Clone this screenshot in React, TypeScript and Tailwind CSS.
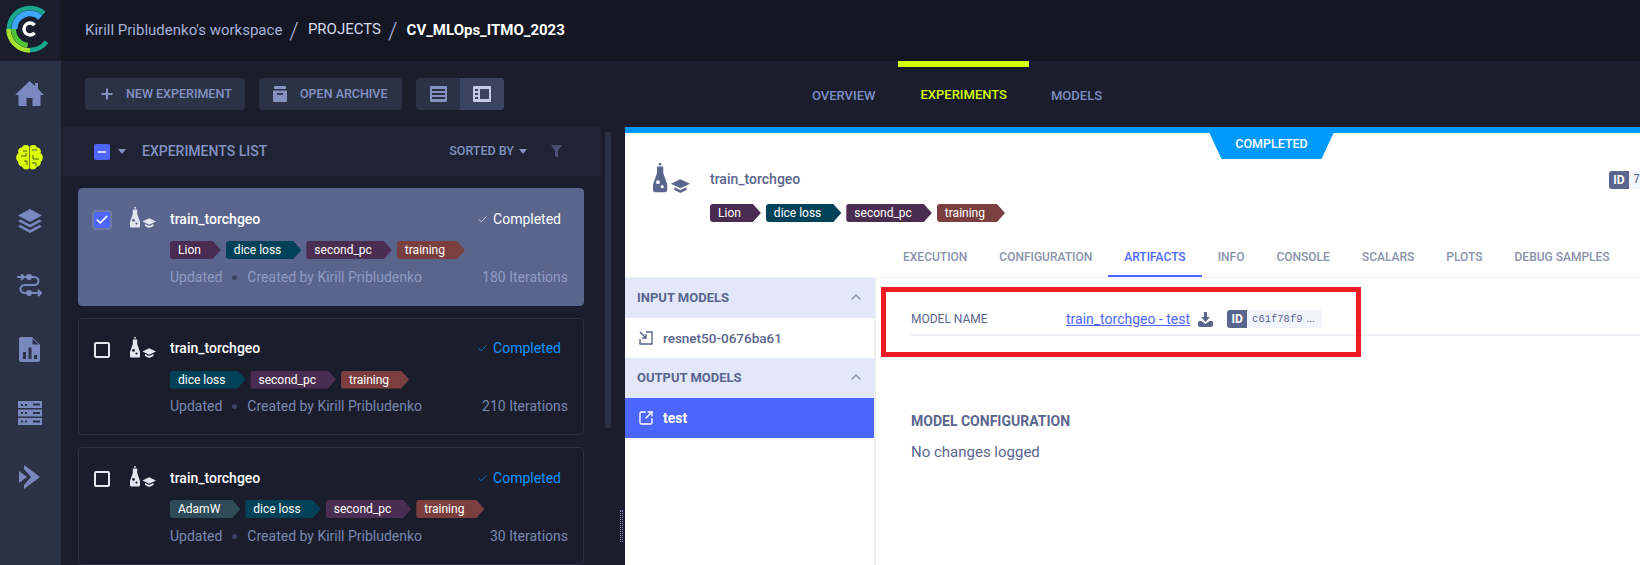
import React from 'react'
import { ChevronUp, Plus, Check, SquareArrowOutUpRight, Minus } from 'lucide-react'

const TAG_COLORS: Record<string, string> = {
  Lion: 'bg-[#4a2c52]',
  'dice loss': 'bg-[#024259]',
  second_pc: 'bg-[#4a2d50]',
  training: 'bg-[#7c3f3f]',
  AdamW: 'bg-[#2f4b57]',
}

const polar = (r: number, deg: number) => {
  const a = (deg * Math.PI) / 180
  return `${(30 + r * Math.cos(a)).toFixed(2)} ${(29 - r * Math.sin(a)).toFixed(2)}`
}

// arc going counter clockwise on screen from a0 to a1 (degrees, 0 = east)
const arc = (r: number, a0: number, a1: number) =>
  `M${polar(r, a0)} A${r} ${r} 0 ${a1 - a0 > 180 ? 1 : 0} 0 ${polar(r, a1)}`

function Logo() {
  return (
    <svg width="61" height="61" viewBox="0 0 61 61" fill="none">
      <path d={arc(21, 48, 180)} stroke="#18a78c" strokeWidth="4.5" />
      <path d={arc(15.5, 48, 180)} stroke="#3ea6ff" strokeWidth="6" />
      <path d={arc(21, -90, -38)} stroke="#18a78c" strokeWidth="4.5" />
      <path d={arc(21.5, 180, 270)} stroke="#a6e22e" strokeWidth="4.5" />
      <path d={arc(16.5, 180, 262)} stroke="#4fc23a" strokeWidth="5" />
      <path d={arc(6, 40, 320)} stroke="#ffffff" strokeWidth="3.4" />
    </svg>
  )
}

function HomeIcon() {
  return (
    <svg width="29" height="25" viewBox="0 0 29 25" fill="currentColor">
      <path d="M14.5 0 L20 5 V2 H23 V8 L29 14 H25.5 V25 H17.5 V17 H11.5 V25 H3.5 V14 H0 Z" />
    </svg>
  )
}

function BrainIcon() {
  return (
    <svg width="27" height="25" viewBox="0 0 27 25">
      <path
        fill="#d9ff00"
        d="M13.2 1.5 C11 -0.5 7 -0.5 6 2.5 C2.5 2.5 1.5 6 2.5 8 C-0.5 10 -0.5 14.5 2 16.5 C2 19.5 4 21.5 6 21.5 C7 24.5 11 25.5 13.2 23.5 Z M13.8 1.5 C16 -0.5 20 -0.5 21 2.5 C24.5 2.5 25.5 6 24.5 8 C27.5 10 27.5 14.5 25 16.5 C25 19.5 23 21.5 21 21.5 C20 24.5 16 25.5 13.8 23.5 Z"
      />
      <path
        fill="none"
        stroke="#2c3246"
        strokeWidth="0.8"
        d="M7 6 H11 M5 11 H10 V8 M8 16 H11 V20 M16 5 H21 M17 10 V14 H23 M16 18 H20 V21"
      />
    </svg>
  )
}

function LayersIcon() {
  return (
    <svg width="24" height="24" viewBox="0 0 24 24" fill="currentColor">
      <path d="M12 0 L24 6.5 L12 13 L0 6.5 Z" />
      <path d="M2.5 10.5 L12 15.5 L21.5 10.5 L24 12 L12 18.5 L0 12 Z" />
      <path d="M2.5 16 L12 21 L21.5 16 L24 17.5 L12 24 L0 17.5 Z" />
    </svg>
  )
}

function FlowIcon() {
  return (
    <svg width="25" height="23" viewBox="0 0 25 23" fill="none" stroke="currentColor" strokeWidth="2">
      <path d="M0 3 H17 C23 3 23 11 17 11 H8 C2 11 2 19 8 19 H24" />
      <path d="M4 0 L7 3 L4 6 M21 16 L24 19 L21 22" />
      <circle cx="12" cy="3" r="2" fill="currentColor" />
      <circle cx="12" cy="19" r="2" fill="currentColor" />
    </svg>
  )
}

function ReportIcon() {
  return (
    <svg width="21" height="25" viewBox="0 0 21 25">
      <path fill="currentColor" d="M2 0 H13 L21 8 V23 C21 24 20 25 19 25 H2 C1 25 0 24 0 23 V2 C0 1 1 0 2 0 Z" />
      <path fill="#2c3246" d="M13.5 1.5 L19.5 7.5 H13.5 Z M4 15 H7 V22 H4 Z M9.5 10.5 H12.5 V22 H9.5 Z M15 18 H18 V22 H15 Z" />
    </svg>
  )
}

function ServerIcon() {
  return (
    <svg width="24" height="24" viewBox="0 0 24 24">
      <path fill="currentColor" d="M0 0 H24 V7 H0 Z M0 8.5 H24 V15.5 H0 Z M0 17 H24 V24 H0 Z" />
      <path
        fill="#2c3246"
        d="M3 3 H5 V5 H3 Z M7 3 H9 V5 H7 Z M15 2.5 H22 V4.5 H15 Z M3 11 H5 V13 H3 Z M7 11 H9 V13 H7 Z M15 11 H22 V13 H15 Z M3 19.5 H5 V21.5 H3 Z M7 19.5 H9 V21.5 H7 Z M15 19.5 H22 V21.5 H15 Z"
      />
    </svg>
  )
}

function DeployIcon() {
  return (
    <svg width="21" height="24" viewBox="0 0 21 24" fill="currentColor">
      <path d="M5 0 L21 12 L5 24 V20 L12 12 L5 4 Z" />
      <path d="M0 6 L8 12 L0 18 Z" />
    </svg>
  )
}

function ExperimentIcon({ className }: { className?: string }) {
  return (
    <svg className={className} viewBox="0 0 26 21" fill="currentColor">
      <circle cx="5" cy="0.8" r="0.9" />
      <path
        fillRule="evenodd"
        d="M2.8 2.5 H7.2 V7 L10 15 V19 C10 20 9.4 20.5 8.4 20.5 H1.6 C0.6 20.5 0 20 0 19 V15 L2.8 7 Z M3.5 12 A1.4 1.4 0 1 0 3.5 14.8 A1.4 1.4 0 1 0 3.5 12 Z M6.5 15.5 A1.1 1.1 0 1 0 6.5 17.7 A1.1 1.1 0 1 0 6.5 15.5 Z"
      />
      <path d="M12.5 14.5 L19.2 11.3 L26 14.5 L19.2 17.7 Z" />
      <path d="M15 17 L19.2 19 L23.5 17 V19 L19.2 21 L15 19 Z" />
    </svg>
  )
}

function Tag({ label }: { label: string }) {
  return (
    <span
      className={`${TAG_COLORS[label]} h-[18px] pl-2 pr-[20px] rounded-l-[3px] text-[12px] leading-[18px] text-white [clip-path:polygon(0_0,calc(100%-8px)_0,100%_50%,calc(100%-8px)_100%,0_100%)]`}
    >
      {label}
    </span>
  )
}

function ExperimentCard({
  tags,
  iterations,
  selected,
}: {
  tags: string[]
  iterations: number
  selected?: boolean
}) {
  return (
    <div
      className={`h-[117.5px] shrink-0 flex rounded border pt-[23px] pl-[15px] ${
        selected ? 'bg-[#5a658e] border-[#5a658e]' : 'bg-[#1a1e2c] border-[#2c3246]'
      }`}
    >
      {selected ? (
        <span className="w-4 h-4 rounded-[2px] bg-[#4d66ff] outline-2 outline-[#6f7ba3] flex items-center justify-center text-white">
          <Check size={14} strokeWidth={3} />
        </span>
      ) : (
        <span className="w-4 h-4 rounded-[2px] border-2 border-[#e6e8f0]" />
      )}
      <ExperimentIcon className="w-[26px] h-[21px] ml-[20px] -mt-[5px] text-[#e3e6ef]" />
      <div className="ml-[14px] flex-1 pr-[15px]">
        <div className="flex items-center justify-between h-5 -mt-[3px]">
          <span className="text-[14px] font-medium text-white">train_torchgeo</span>
          <span
            className={`flex items-center gap-[5px] text-[14px] pr-[7px] ${
              selected ? 'text-white' : 'text-[#0a94ff]'
            }`}
          >
            <Check size={11} strokeWidth={1.5} />
            Completed
          </span>
        </div>
        <div className="flex gap-[5px] mt-[12px]">
          {tags.map((t) => (
            <Tag key={t} label={t} />
          ))}
        </div>
        <div className={`flex justify-between items-center mt-[8px] text-[14px] h-5 ${selected ? 'text-[#8e9ac4]' : 'text-[#7b87ad]'}`}>
          <span className="flex items-center">
            Updated
            <span className="w-[5px] h-[5px] rounded-full bg-[#3b4364] mx-[10px]" />
            Created by Kirill Pribludenko
          </span>
          <span>{iterations} Iterations</span>
        </div>
      </div>
    </div>
  )
}

function ModelSection({ title }: { title: string }) {
  return (
    <div className="h-10 bg-[#e2e7fb] flex items-center justify-between pl-3 pr-[10px] text-[13px] font-bold text-[#5a658e]">
      {title}
      <ChevronUp size={16} className="text-[#8a94b8] -mt-[2px]" />
    </div>
  )
}

export default function App() {
  const navIcons = [
    <HomeIcon key="home" />,
    <BrainIcon key="brain" />,
    <LayersIcon key="layers" />,
    <FlowIcon key="flow" />,
    <ReportIcon key="report" />,
    <ServerIcon key="server" />,
    <DeployIcon key="deploy" />,
  ]
  const tabs = ['EXECUTION', 'CONFIGURATION', 'ARTIFACTS', 'INFO', 'CONSOLE', 'SCALARS', 'PLOTS', 'DEBUG SAMPLES']

  return (
    <div className="w-[1640px] h-[565px] overflow-hidden flex bg-[#1a1e2c] font-['Roboto',sans-serif]">
      {/* Sidebar */}
      <div className="w-[61px] shrink-0 flex flex-col bg-[#2c3246]">
        <div className="h-[61px] bg-[#1a1e2c]">
          <Logo />
        </div>
        <div className="flex flex-col items-center">
          {navIcons.map((icon, i) => (
            <div key={i} className="h-16 w-full flex items-center justify-center text-[#7a88c0] -ml-[2px]">
              {icon}
            </div>
          ))}
        </div>
      </div>

      <div className="flex-1 min-w-0 flex flex-col">
        {/* Top bar */}
        <div className="h-[61px] shrink-0 bg-[#141722] flex items-center pl-6 text-[15px]">
          <span className="text-[#a4b0d8]">Kirill Pribludenko's workspace</span>
          <span className="text-[#a4b0d8] text-[24px] font-light ml-[7px] mr-[9px]">/</span>
          <span className="text-[#d5daea] -mt-[2px]">PROJECTS</span>
          <span className="text-[#a4b0d8] text-[24px] font-light ml-[7px] mr-[9px]">/</span>
          <span className="text-white font-bold">CV_MLOps_ITMO_2023</span>
        </div>

        {/* Toolbar + project tabs */}
        <div className="h-[66px] shrink-0 relative flex pt-[17px] pl-6 gap-[14px]">
          <button className="h-8 w-[160px] rounded bg-[#2c3246] flex items-center pl-[14px] text-[12.5px] font-medium text-[#8492c2]">
            <Plus size={16} strokeWidth={3} className="mr-[11px]" />
            NEW EXPERIMENT
          </button>
          <button className="h-8 w-[143px] rounded bg-[#2c3246] flex items-center pl-[14px] text-[12.5px] font-medium text-[#8492c2]">
            <svg width="14" height="16" viewBox="0 0 14 16" fill="currentColor" className="mr-[13px]">
              <path d="M1 0 H13 V3 H1 Z" />
              <path fillRule="evenodd" d="M0 4.5 H14 V15 C14 15.5 13.5 16 13 16 H1 C0.5 16 0 15.5 0 15 Z M4 7 V8.8 H10 V7 Z" />
            </svg>
            OPEN ARCHIVE
          </button>
          <div className="h-8 w-[88px] rounded bg-[#2c3246] flex overflow-hidden">
            <div className="w-11 flex items-center justify-center text-[#8492c2]">
              <svg width="17" height="16" viewBox="0 0 17 16" fill="currentColor">
                <path fillRule="evenodd" d="M1 0 H16 C16.5 0 17 0.5 17 1 V15 C17 15.5 16.5 16 16 16 H1 C0.5 16 0 15.5 0 15 V1 C0 0.5 0.5 0 1 0 Z M2 3 V5 H15 V3 Z M2 7 V9 H15 V7 Z M2 11 V13 H15 V11 Z" />
              </svg>
            </div>
            <div className="w-11 bg-[#3a4361] flex items-center justify-center text-[#c3cbe6]">
              <svg width="18" height="16" viewBox="0 0 18 16" fill="currentColor">
                <path fillRule="evenodd" d="M1 0 H17 C17.5 0 18 0.5 18 1 V15 C18 15.5 17.5 16 17 16 H1 C0.5 16 0 15.5 0 15 V1 C0 0.5 0.5 0 1 0 Z M2 3 V5 H5 V3 Z M2 7 V9 H5 V7 Z M2 11 V13 H5 V11 Z M7 3 V13 H16 V3 Z" />
              </svg>
            </div>
          </div>
          <div className="absolute left-[751px] top-0 flex text-[13px] font-medium">
            <div className="pt-[25px] text-[#7f8dc4]">OVERVIEW</div>
            <div className="ml-[45px] text-[#d4ff00]">
              <div className="-mx-[22px] h-[6px] bg-[#d4ff00]" />
              <div className="mt-[18px]">EXPERIMENTS</div>
            </div>
            <div className="ml-[44px] pt-[25px] text-[#7f8dc4]">MODELS</div>
          </div>
        </div>

        {/* Body */}
        <div className="flex-1 min-h-0 flex">
          {/* Experiments list */}
          <div className="w-[540px] shrink-0 flex flex-col">
            <div className="h-[49px] shrink-0 bg-[#1f2333] flex items-center pl-[33px] pr-[39px]">
              <span className="w-4 h-4 rounded-[2px] bg-[#4d66ff] flex items-center justify-center text-white">
                <Minus size={12} strokeWidth={3} />
              </span>
              <span className="ml-2 w-0 h-0 border-x-[4px] border-x-transparent border-t-[5px] border-t-[#8492c2]" />
              <span className="ml-4 text-[14px] font-medium text-[#8492c2]">EXPERIMENTS LIST</span>
              <span className="ml-auto text-[12.5px] font-medium text-[#8492c2]">SORTED BY</span>
              <span className="ml-[5px] w-0 h-0 border-x-[4.5px] border-x-transparent border-t-[5px] border-t-[#8492c2]" />
              <svg width="11" height="13" viewBox="0 0 11 13" fill="#475070" className="ml-[24px]">
                <path d="M0 0 H11 L7 6 V13 L4 11 V6 Z" />
              </svg>
            </div>
            <div className="flex-1 min-h-0 flex flex-col gap-3 pt-3 pl-[17px] pr-[17px]">
              <ExperimentCard selected tags={['Lion', 'dice loss', 'second_pc', 'training']} iterations={180} />
              <ExperimentCard tags={['dice loss', 'second_pc', 'training']} iterations={210} />
              <ExperimentCard tags={['AdamW', 'dice loss', 'second_pc', 'training']} iterations={30} />
            </div>
          </div>

          {/* Scrollbar and resizer */}
          <div className="w-6 shrink-0 flex pl-1">
            <div className="w-[6px] h-[296px] mt-[5px] rounded-full bg-[#2c3246]" />
            <div className="w-[3px] h-[32px] mt-[383px] ml-[9px] border-x border-dotted border-[#8492c2]" />
          </div>

          {/* Details panel */}
          <div className="flex-1 min-w-0 relative bg-white border-t-[6px] border-[#009aff]">
            <div className="absolute left-[584px] -top-[1px] w-[125px] h-[27px] bg-[#009aff] [clip-path:polygon(0_0,100%_0,90%_100%,10%_100%)] flex items-center justify-center pb-[3px] text-[12.5px] font-medium text-white">
              COMPLETED
            </div>

            <div className="h-[144px] pl-[28px] relative">
              <div className="flex pt-[30px]">
                <ExperimentIcon className="w-[37px] h-[30px] text-[#5a658e]" />
                <span className="ml-[20px] mt-[6px] text-[14px] font-medium leading-5 text-[#5a658e]">train_torchgeo</span>
                <div className="ml-auto mt-[8px] flex h-[18px] text-[12px] font-bold">
                  <span className="w-5 rounded-l-[3px] bg-[#5a658e] text-white text-center leading-[18px]">ID</span>
                  <span className="pl-1 w-[11px] bg-[#f2f4fc] text-[#5a658e] font-normal font-['Liberation_Mono',monospace]">7</span>
                </div>
              </div>
              <div className="flex gap-[5px] mt-[11px] ml-[57px]">
                {['Lion', 'dice loss', 'second_pc', 'training'].map((t) => (
                  <Tag key={t} label={t} />
                ))}
              </div>
              <div className="absolute left-[278px] bottom-0 flex gap-[32px] h-[39px] text-[12px] font-medium">
                {tabs.map((t) => (
                  <div key={t} className={`relative pt-[10px] ${t === 'ARTIFACTS' ? 'text-[#4d66ff]' : 'text-[#8a92ab]'}`}>
                    {t}
                    {t === 'ARTIFACTS' && <div className="absolute -left-4 -right-4 top-[37px] h-[2px] bg-[#4d66ff]" />}
                  </div>
                ))}
              </div>
            </div>

            <div className="h-[288px] flex border-t border-[#eceef5]">
              {/* Models tree */}
              <div className="w-[251px] shrink-0 border-r-2 border-[#eceef5]">
                <ModelSection title="INPUT MODELS" />
                <div className="h-10 flex items-center pl-[14px] text-[13.5px] font-medium text-[#5a658e]">
                  <svg width="14" height="14" viewBox="0 0 14 14" fill="none" stroke="currentColor" strokeWidth="1.4">
                    <path d="M7 1 H13 V13 H1 V8 M1 1 L7 7 M7 3 V7 H3" />
                  </svg>
                  <span className="ml-[10px]">resnet50-0676ba61</span>
                </div>
                <ModelSection title="OUTPUT MODELS" />
                <div className="h-10 bg-[#4d66ff] flex items-center pl-[13px] text-[14px] font-bold text-white">
                  <SquareArrowOutUpRight size={16} strokeWidth={2} />
                  <span className="ml-[9px]">test</span>
                </div>
              </div>

              {/* Model details */}
              <div className="flex-1 min-w-0 pl-[35px]">
                <div className="h-[58px] flex items-center border-b-2 border-[#eff1f7] pt-[28px] pb-[2px]">
                  <span className="w-[155px] text-[12px] text-[#5a658e]">MODEL NAME</span>
                  <span className="text-[14px] text-[#4d66ff] underline">train_torchgeo - test</span>
                  <svg width="15" height="15" viewBox="0 0 15 15" fill="#5a658e" className="ml-[8px]">
                    <path d="M6 0 H9 V5 H12 L7.5 10 L3 5 H6 Z" />
                    <path d="M0 11 C0 9.5 1 9 2 9 H3.5 L7.5 12 L11.5 9 H13 C14 9 15 9.5 15 11 V13 C15 14 14 15 13 15 H2 C1 15 0 14 0 13 Z" />
                  </svg>
                  <div className="ml-[14px] flex h-[18px] w-[95px] rounded-[3px] bg-[#f2f4fc]">
                    <span className="w-5 shrink-0 rounded-l-[3px] bg-[#5a658e] text-white text-center text-[12px] font-bold leading-[18px]">ID</span>
                    <span className="pl-[5px] text-[10.5px] leading-[18px] text-[#5a658e] font-['Liberation_Mono',monospace]">c61f78f9</span>
                    <span className="pl-[4px] text-[10.5px] leading-[18px] text-[#5a658e]">...</span>
                  </div>
                </div>
                <div className="mt-[75px] text-[14px] font-bold text-[#5a658e]">MODEL CONFIGURATION</div>
                <div className="mt-[9px] text-[15px] text-[#5a658e]">No changes logged</div>
              </div>
            </div>

            {/* Annotation drawn over the screenshot */}
            <div className="absolute left-[256px] top-[154px] w-[480px] h-[70px] border-[5px] border-[#ed1c24]" />
          </div>
        </div>
      </div>
    </div>
  )
}
